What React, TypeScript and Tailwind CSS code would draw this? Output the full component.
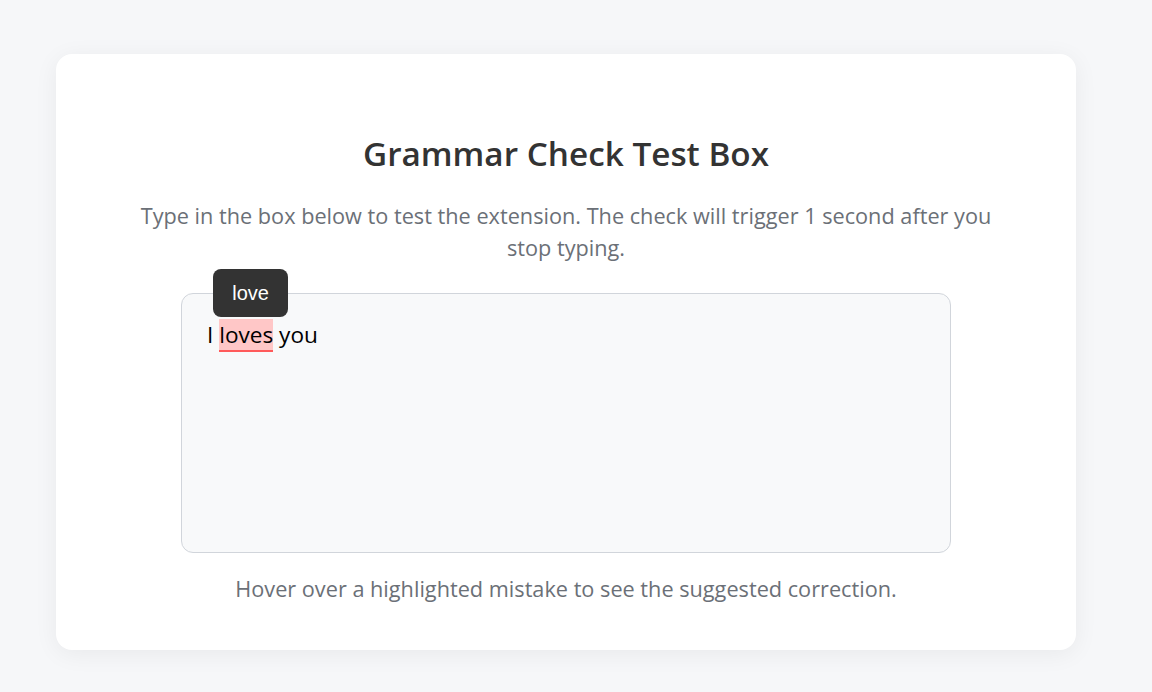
import React from "react";

export default function App() {
  return (
    <div className="min-h-[692px] w-full bg-[#f6f7f9] pt-[54px] pl-[56px]" style={{ fontFamily: '"Open Sans", "Noto Sans", sans-serif' }}>
      <div className="w-[1020px] h-[596px] rounded-[16px] bg-white shadow-[0_4px_24px_rgba(0,0,0,0.06)] flex flex-col items-center pt-[80px]">
        <h1 className="text-[33.3px] leading-[38px] font-semibold text-[#333333]">Grammar Check Test Box</h1>
        <p className="mt-[28px] w-[880px] text-center text-[21.7px] leading-[32px] text-[#6b7077]">
          Type in the box below to test the extension. The check will trigger 1 second after you stop typing.
        </p>
        <div className="relative mt-[29px] w-[770px] h-[260px] rounded-[12px] border border-[#d1d5db] bg-[#f8f9fa] px-[25px] pt-[26px]">
          <div className="text-[22.6px] leading-[30px] text-black">
            I{" "}
            <span className="relative bg-[#ffc7c7] border-b-2 border-[#ff5a5a]">
              loves
              <span className="absolute left-[-6px] bottom-[33px] rounded-[8px] bg-[#333333] px-[19px] py-[10px] text-[20px] leading-[28px] text-white whitespace-nowrap" style={{ fontFamily: '"Liberation Sans", Arial, sans-serif' }}>
                love
              </span>
            </span>{" "}
            you
          </div>
        </div>
        <p className="mt-[20px] text-[21.7px] leading-[32px] text-[#6b7077]">
          Hover over a highlighted mistake to see the suggested correction.
        </p>
      </div>
    </div>
  );
}
